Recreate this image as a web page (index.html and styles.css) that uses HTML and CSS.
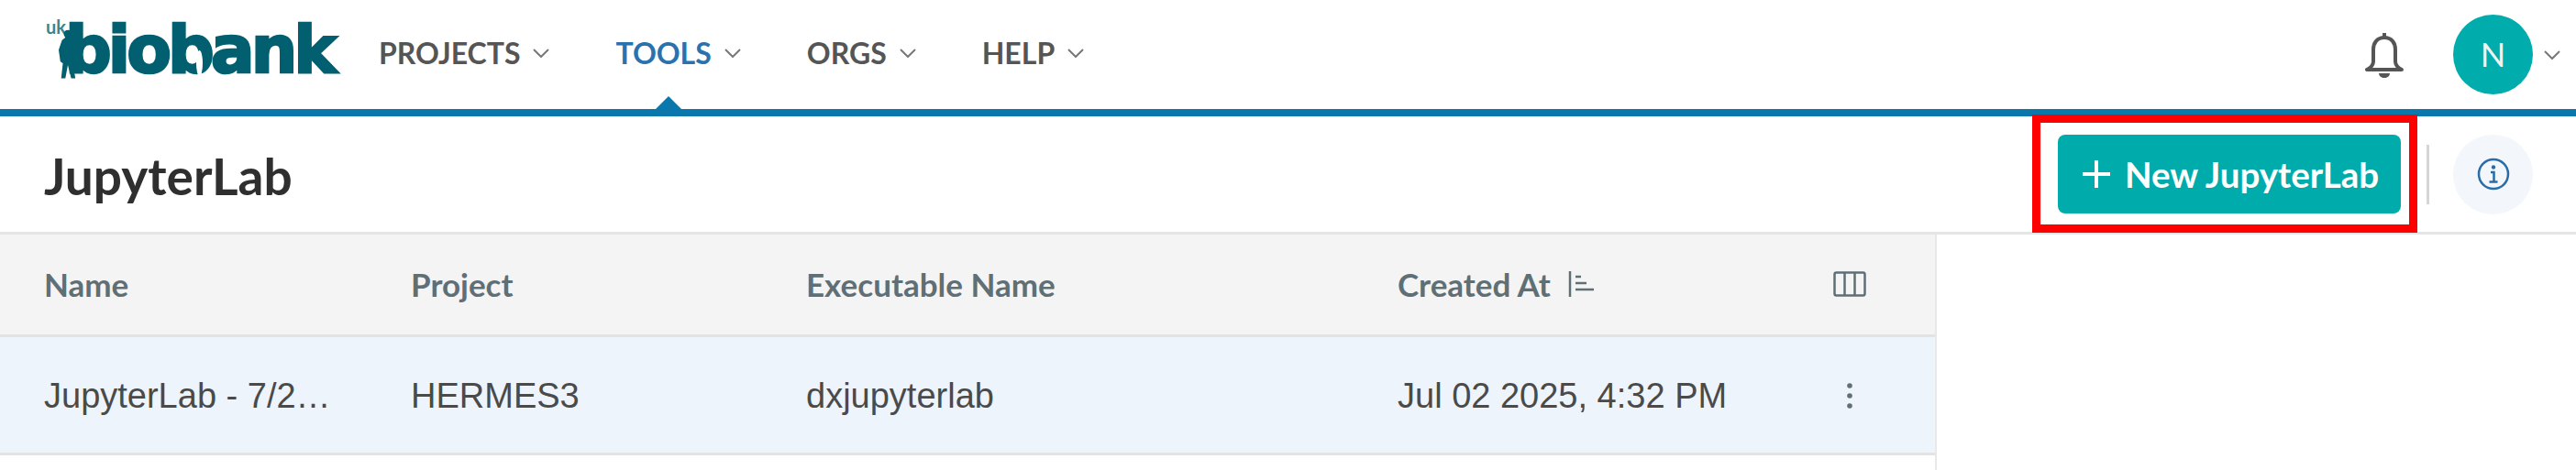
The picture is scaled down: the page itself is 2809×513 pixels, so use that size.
FILE: index.html
```html
<!DOCTYPE html>
<html lang="en">
<head>
<meta charset="UTF-8" />
<meta name="viewport" content="width=device-width, initial-scale=1" />
<title>JupyterLab</title>
<link rel="stylesheet" href="styles.css">
</head>
<body>
  <header class="topbar">
    <a class="logo">
      <span class="logo-uk">uk</span>
      <span class="logo-word">biobank</span>
      <svg class="logo-figure" viewBox="0 0 22 60"><path d="M11 0c3 0 5 2 5 5s-1 4-2 5l4 2 2 20-3 1v8l3 17h-5l-4-16-3 16H3l2-18-3-2-2-14 4-12 4-3c-1-1-2-3-2-4 0-3 2-5 5-5z"/></svg>
      <span class="logo-slit"></span>
    </a>
    <nav class="nav">
      <a class="nav-item">PROJECTS <svg class="chevron" viewBox="0 0 18 10"><path d="M1 1l8 8 8-8"/></svg></a>
      <a class="nav-item active">TOOLS <svg class="chevron" viewBox="0 0 18 10"><path d="M1 1l8 8 8-8"/></svg></a>
      <a class="nav-item">ORGS <svg class="chevron" viewBox="0 0 18 10"><path d="M1 1l8 8 8-8"/></svg></a>
      <a class="nav-item">HELP <svg class="chevron" viewBox="0 0 18 10"><path d="M1 1l8 8 8-8"/></svg></a>
    </nav>
    <div class="user-area">
      <svg class="bell" viewBox="0 0 42 52"><path d="M21 2v5M21 7c-8 0-12 6-12 13v13c0 4-3 7-7 9h38c-4-2-7-5-7-9V20c0-7-4-13-12-13z"/><path class="bell-clap" d="M15 46h12c0 3-3 5-6 5s-6-2-6-5z"/></svg>
      <div class="avatar">N</div>
      <svg class="chevron" viewBox="0 0 18 10"><path d="M1 1l8 8 8-8"/></svg>
    </div>
  </header>

  <section class="toolbar">
    <h1 class="page-title">JupyterLab</h1>
    <div class="new-wrap">
      <button class="btn-new" type="button"><svg class="plus" viewBox="0 0 32 32"><path d="M16 1v30M1 16h30"/></svg>New JupyterLab</button>
      <span class="callout"></span>
    </div>
    <span class="divider"></span>
    <button class="btn-info" type="button">
      <svg viewBox="0 0 36 36"><circle cx="18" cy="18" r="16"/><circle class="dot" cx="18" cy="10.5" r="2.2"/><path d="M15 16h3.5v10M13.5 26.500h9"/></svg>
    </button>
  </section>

  <main class="table-panel">
    <div class="row head">
      <div class="cell">Name</div>
      <div class="cell">Project</div>
      <div class="cell">Executable Name</div>
      <div class="cell">Created At
        <svg class="sort" viewBox="0 0 30 30"><path d="M3 1v28M9 7h6M9 14h12M9 21h20"/></svg>
      </div>
      <div class="cell action">
        <svg class="cols" viewBox="0 0 36 28"><rect x="1.500" y="1.500" width="33" height="25" rx="2"/><path d="M12.500 1.500v25M23.500 1.500v25"/></svg>
      </div>
    </div>
    <div class="row item">
      <div class="cell">JupyterLab - 7/2…</div>
      <div class="cell">HERMES3</div>
      <div class="cell">dxjupyterlab</div>
      <div class="cell">Jul 02 2025, 4:32 PM</div>
      <div class="cell action">
        <svg class="kebab" viewBox="0 0 6 28"><circle cx="3" cy="3" r="2.800"/><circle cx="3" cy="14" r="2.800"/><circle cx="3" cy="25" r="2.800"/></svg>
      </div>
    </div>
  </main>
</body>
</html>
```

FILE: styles.css
```css
* {
  box-sizing: border-box;
}
html, body {
  height: 100%;
}
body {
  margin: 0;
  background: #fff;
  display: flex;
  flex-direction: column;
  overflow: hidden;
  font-family: Lato, 'Liberation Sans', sans-serif;
}

/* top bar */
.topbar {
  height: 127px;
  flex: none;
  display: flex;
  align-items: center;
  border-bottom: 8px solid #0a78ad;
  padding-left: 50px;
  position: relative;
}
.logo {
  position: relative;
  display: block;
  width: 363px;
  height: 119px;
  flex: none;
}
.logo-uk {
  position: absolute;
  left: 0;
  top: 17px;
  font-size: 20px;
  font-weight: 700;
  line-height: 24px;
  color: #3d8391;
}
.logo-word {
  position: absolute;
  left: 21px;
  top: 10px;
  font-family: 'DejaVu Sans', sans-serif;
  font-weight: 700;
  font-size: 71px;
  line-height: 90px;
  letter-spacing: -4px;
  color: #015f70;
  -webkit-text-stroke: 2.500px #015f70;
}
.logo-figure {
  position: absolute;
  left: 14px;
  top: 32px;
  width: 20px;
  height: 56px;
  fill: #015f70;
}
.logo-slit {
  position: absolute;
  left: 164px;
  top: 55px;
  width: 7px;
  height: 28px;
  border-radius: 50%;
  background: #fff;
}
.nav {
  display: flex;
  align-items: center;
  gap: 72px;
  margin-top: -4px;
}
.nav-item {
  display: flex;
  align-items: center;
  gap: 14px;
  font-size: 32px;
  font-weight: 700;
  color: #555;
}
.nav-item.active {
  color: #2a72ad;
  position: relative;
}
.nav-item.active::after {
  content: '';
  position: absolute;
  left: 44px;
  top: 67px;
  border-left: 14px solid transparent;
  border-right: 14px solid transparent;
  border-bottom: 14px solid #0a78ad;
}
.chevron {
  width: 18px;
  height: 10px;
  fill: none;
  stroke: #777;
  stroke-width: 2;
}
.user-area {
  margin-left: auto;
  display: flex;
  align-items: center;
  padding-right: 17px;
}
.bell {
  width: 42px;
  height: 52px;
  margin-right: 54px;
  fill: none;
  stroke: #555;
  stroke-width: 4;
  stroke-linejoin: round;
}
.bell .bell-clap {
  fill: #555;
  stroke: none;
}
.avatar {
  width: 87px;
  height: 87px;
  border-radius: 50%;
  background: #00acac;
  color: #f2f2f2;
  font-size: 36px;
  line-height: 87px;
  text-align: center;
  margin-right: 12px;
}

/* title row */
.toolbar {
  height: 129px;
  flex: none;
  display: flex;
  align-items: center;
  padding-right: 47px;
  border-bottom: 3px solid #e5e5e5;
}
.page-title {
  margin: 4px auto 0 48px;
  font-size: 55px;
  font-weight: 700;
  color: #2f2f2f;
}
.new-wrap {
  position: relative;
}
.btn-new {
  display: flex;
  align-items: center;
  width: 374px;
  height: 86px;
  padding: 0 0 0 26px;
  gap: 15px;
  background: #00abab;
  color: #fff;
  border: none;
  border-radius: 8px;
  font-family: Lato, sans-serif;
  font-size: 38.500px;
  font-weight: 700;
}
.plus {
  width: 32px;
  height: 32px;
  fill: none;
  stroke: #fff;
  stroke-width: 4;
}
.callout {
  position: absolute;
  top: -22px;
  bottom: -21px;
  left: -28px;
  right: -18px;
  border: 9px solid #f00;
}
.divider {
  width: 3px;
  height: 65px;
  background: #d5d5d5;
  margin: 0 26px 0 28px;
}
.btn-info {
  width: 87px;
  height: 87px;
  padding: 0;
  border: none;
  border-radius: 50%;
  background: #f3f6fa;
  display: flex;
  align-items: center;
  justify-content: center;
}
.btn-info svg {
  width: 36px;
  height: 36px;
  fill: none;
  stroke: #2a6ca8;
  stroke-width: 2.500;
}
.btn-info .dot {
  fill: #2a6ca8;
  stroke: none;
}

/* table */
.table-panel {
  width: 2112px;
  flex: 1;
  border-right: 2px solid #e8e8e8;
}
.row {
  display: grid;
  grid-template-columns: 400px 431px 645px 400px 1fr;
  align-items: center;
  padding-left: 48px;
}
.row.head {
  height: 112px;
  background: #f4f4f4;
  border-bottom: 3px solid #e3e3e3;
  color: #5f6f76;
  font-size: 35px;
  font-weight: 700;
}
.row.head .cell {
  margin-top: -2px;
}
.row.item {
  height: 129px;
  background: #eef4fc;
  border-bottom: 3px solid #e3e3e3;
  color: #4a4a4a;
  font-family: 'Liberation Sans', Arial, sans-serif;
  font-size: 38px;
}
.row.item .cell {
  margin-top: 2px;
}
.cell {
  display: flex;
  align-items: center;
  white-space: nowrap;
}
.action {
  justify-content: center;
}
.sort {
  width: 30px;
  height: 30px;
  margin-left: 18px;
  fill: none;
  stroke: #5f6f76;
  stroke-width: 2.500;
}
.cols {
  width: 36px;
  height: 28px;
  fill: none;
  stroke: #5f6f76;
  stroke-width: 2.500;
}
.kebab {
  width: 6px;
  height: 28px;
  fill: #5f6f76;
}
```
